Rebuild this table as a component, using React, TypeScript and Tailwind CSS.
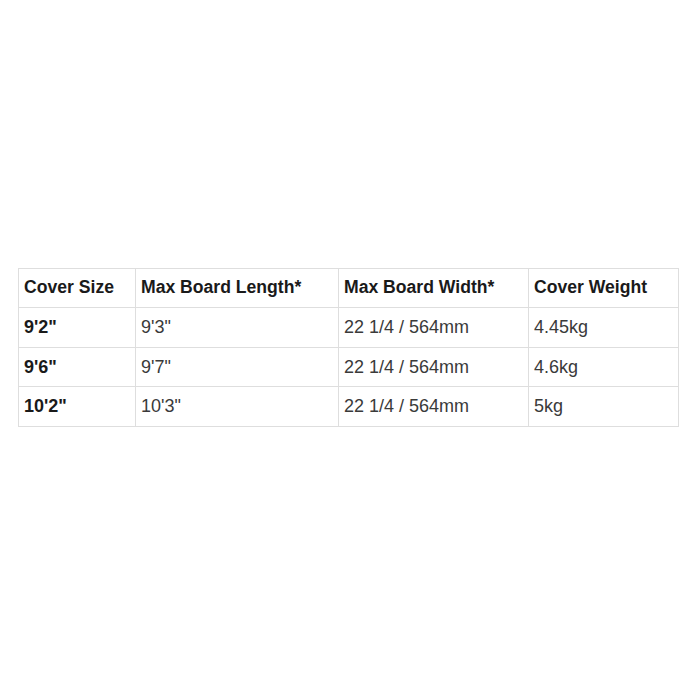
export default function App() {
  const rows = [
    ["9'2\"", "9'3\"", "22 1/4 / 564mm", "4.45kg"],
    ["9'6\"", "9'7\"", "22 1/4 / 564mm", "4.6kg"],
    ["10'2\"", "10'3\"", "22 1/4 / 564mm", "5kg"],
  ];
  const widths = ["w-[117px]", "w-[203px]", "w-[190px]", "w-[150px]"];
  return (
    <div className="w-[700px] h-[700px] bg-white pt-[268px] pl-[18px]" style={{ fontFamily: '"Liberation Sans", Arial, sans-serif' }}>
      <table className="border-collapse border border-[#dedede] text-[18px]">
        <thead>
          <tr className="h-[39px]">
            {["Cover Size", "Max Board Length*", "Max Board Width*", "Cover Weight"].map((h, i) => (
              <th key={i} className={`${widths[i]} border border-[#dedede] text-left font-bold text-[17.6px] text-[#1a1a1a] pl-[5px] pr-1 py-0 leading-none`}>
                {h}
              </th>
            ))}
          </tr>
        </thead>
        <tbody>
          {rows.map((r, ri) => (
            <tr key={ri} className="h-[39.5px]">
              {r.map((c, ci) => (
                <td
                  key={ci}
                  className={`${widths[ci]} border border-[#dedede] text-left pl-[5px] pr-1 py-0 leading-none ${ci === 0 ? "font-bold text-[#1a1a1a]" : "text-[#3a3a3a]"}`}
                >
                  {c}
                </td>
              ))}
            </tr>
          ))}
        </tbody>
      </table>
    </div>
  );
}
